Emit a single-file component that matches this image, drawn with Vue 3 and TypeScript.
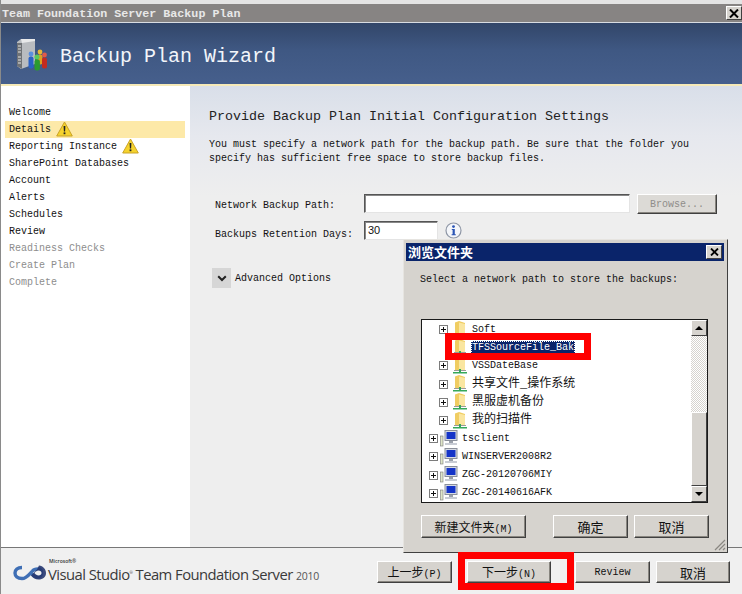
<script setup lang="ts">
interface NavItem { label: string; warn?: boolean; active?: boolean; off?: boolean }
const nav: NavItem[] = [
  { label: 'Welcome' },
  { label: 'Details', warn: true, active: true },
  { label: 'Reporting Instance', warn: true },
  { label: 'SharePoint Databases' },
  { label: 'Account' },
  { label: 'Alerts' },
  { label: 'Schedules' },
  { label: 'Review' },
  { label: 'Readiness Checks', off: true },
  { label: 'Create Plan', off: true },
  { label: 'Complete', off: true },
]
interface TreeRow { label: string; kind: 'folder' | 'pc'; selected?: boolean; noPlus?: boolean; big?: boolean }
const rows: TreeRow[] = [
  { label: 'Soft', kind: 'folder' },
  { label: 'TFSSourceFile_Bak', kind: 'folder', selected: true, noPlus: true },
  { label: 'VSSDateBase', kind: 'folder' },
  { label: '共享文件_操作系统', kind: 'folder', big: true },
  { label: '黑服虚机备份', kind: 'folder', big: true },
  { label: '我的扫描件', kind: 'folder', big: true },
  { label: 'tsclient', kind: 'pc' },
  { label: 'WINSERVER2008R2', kind: 'pc' },
  { label: 'ZGC-20120706MIY', kind: 'pc' },
  { label: 'ZGC-20140616AFK', kind: 'pc' },
]
</script>

<template>
  <div class="win">
    <div class="topline"></div>
    <div class="titlebar">
      <span class="ttext">Team Foundation Server Backup Plan</span>
      <button class="xbtn">
        <svg width="10" height="9" viewBox="0 0 10 9"><path d="M1 0.5 9 8.5M9 0.5 1 8.5" stroke="#000" stroke-width="2" fill="none" /></svg>
      </button>
    </div>
    <header class="banner">
      <svg class="srv" width="32" height="34" viewBox="0 0 32 34">
        <path d="M1 5 5 2H19V27L5 32 1 29Z" fill="#b9bcc0" />
        <path d="M5 2H19V4L6 6Z" fill="#e8e9ea" />
        <path d="M1 6 6 6V32L1 29Z" fill="#6f7276" />
        <path d="M2 9h3M2 12h3M2 15h3M2 20h3M2 23h3M2 26h3" stroke="#e4e4e4" stroke-width="1" />
        <circle cx="15" cy="17" r="2.4" fill="#5a8fe0" />
        <rect x="12.5" y="19.5" width="5" height="12" rx="2" fill="#2a62c4" />
        <circle cx="24" cy="15" r="2.4" fill="#e8b838" />
        <rect x="21.5" y="17.5" width="5" height="10" rx="2" fill="#e0a020" />
        <circle cx="28.5" cy="18" r="2.4" fill="#e05a4a" />
        <rect x="26" y="20.5" width="5" height="11" rx="2" fill="#c42a20" />
        <circle cx="21" cy="20" r="2.6" fill="#5cc85c" />
        <rect x="18.5" y="22.5" width="5.4" height="11" rx="2" fill="#2a9a30" />
      </svg>
      <span class="banner-title">Backup Plan Wizard</span>
    </header>
    <div class="accent"></div>

    <div class="body">
      <nav class="side">
        <div v-for="n in nav" :key="n.label" class="nav" :class="{ active: n.active, off: n.off }">
          <span>{{ n.label }}</span>
          <svg v-if="n.warn" class="warn" width="17" height="16" viewBox="0 0 17 16">
            <path d="M8.5 1 16.3 15H.7Z" fill="#f6d32d" stroke="#c9a227" stroke-linejoin="round" />
            <path d="M7.6 5h1.8l-.3 5.4h-1.2Z" fill="#222" />
            <rect x="7.6" y="11.4" width="1.8" height="1.8" fill="#222" />
          </svg>
        </div>
      </nav>
      <main class="main">
        <h1>Provide Backup Plan Initial Configuration Settings</h1>
        <p>You must specify a network path for the backup path. Be sure that the folder you<br />specify has sufficient free space to store backup files.</p>
        <div class="frow first">
          <label>Network Backup Path:</label>
          <div class="input wide"></div>
          <button class="btn browse">Browse...</button>
        </div>
        <div class="frow second">
          <label>Backups Retention Days:</label>
          <div class="input short">30</div>
          <svg class="info" width="17" height="17" viewBox="0 0 17 17">
            <circle cx="8.5" cy="8.5" r="7.5" fill="#f4f6fa" stroke="#8f97a6" stroke-width="1.2" />
            <circle cx="8.5" cy="4.6" r="1.4" fill="#2b55b5" />
            <path d="M6.8 7h3v5.2h1v1H6.6v-1h1V8h-.8Z" fill="#2b55b5" />
          </svg>
        </div>
        <div class="adv">
          <span class="chev">
            <svg width="10" height="7" viewBox="0 0 10 7"><path d="M1.2 1.2 5 5l3.8-3.8" stroke="#222" stroke-width="2" fill="none" /></svg>
          </span>
          <span class="advtext">Advanced Options</span>
        </div>
      </main>
    </div>

    <footer class="foot">
      <div class="logo">
        <svg width="35" height="17" viewBox="0 0 35 17">
          <path d="M9 3.5C4.5 3.5 2 6 2 9s2.5 5.5 7 5.5c5 0 8-5.500 10.500-7.500C21 5 23 5 25 5c2.500 0 3.500 2 3.500 4S27 13 24.500 13C22 13 20 11 18 9" fill="none" stroke="#3f6fb5" stroke-width="3.400" />
          <path d="M26 1.500c4 .5 7 3.500 7 7.500 0 4-3 6.500-7.500 6.500-3 0-5.500-1.500-7.500-4l6-6Z" fill="#26366f" opacity=".9" />
          <path d="M9 6C6.500 6 5 7.500 5 9s1.500 3 4 3c2 0 3.500-1 5-3-1.500-2-3-3-5-3Z" fill="#f0f0f0" />
          <path d="M25.500 6.500c-1.500 0-3 1-4 2.500 1 1.500 2.500 2.500 4 2.500 1.800 0 3-1.100 3-2.500s-1.200-2.500-3-2.500Z" fill="#f0f0f0" />
        </svg>
        <div class="logotext">
          <span class="ms">Microsoft®</span>
          <span class="vs">Visual Studio<sup>®</sup> Team Foundation Server <small>2010</small></span>
        </div>
      </div>
      <div class="foot-btns">
        <button class="btn fb prev">上一步<span class="key">(P)</span></button>
        <button class="btn fb next">下一步<span class="key">(N)</span></button>
        <button class="btn fb rev">Review</button>
        <button class="btn fb cancel">取消</button>
      </div>
    </footer>

    <section class="dialog">
      <div class="dtitle">
        <span>浏览文件夹</span>
        <button class="xbtn small">
          <svg width="9" height="8" viewBox="0 0 9 8"><path d="M1 .5 8 7.500M8 .5 1 7.500" stroke="#000" stroke-width="1.800" fill="none" /></svg>
        </button>
      </div>
      <div class="dmsg">Select a network path to store the backups:</div>
      <div class="tree">
        <div class="rows">
          <div v-for="r in rows" :key="r.label" class="row" :class="r.kind">
            <span class="plus" :class="{ none: r.noPlus }"></span>
            <svg v-if="r.kind === 'folder'" class="ico" width="16" height="17" viewBox="0 0 16 17">
              <path d="M3 1.500 7 0 13 2V13H3Z" fill="#f0cd62" />
              <path d="M7 1.500 13 3V13H7Z" fill="#fae6a0" />
              <path d="M2 13h12v1H2Z" fill="#9a9a9a" />
              <path d="M1 15h14v1.500H1Z" fill="#36a85a" />
              <path d="M7 12h2v3H7Z" fill="#36a85a" />
            </svg>
            <svg v-else class="ico pcico" width="18" height="17" viewBox="0 0 18 17">
              <rect x="0.500" y="6" width="2.500" height="10" fill="#dfe6c8" stroke="#7a7a7a" stroke-width=".6" />
              <rect x="5" y="0.500" width="12" height="10" fill="#d8dce4" stroke="#8a8f9a" />
              <rect x="6.500" y="2" width="9" height="7" fill="#1534c8" />
              <path d="M9 11h4v2H9Z" fill="#9aa0aa" />
              <path d="M5 13h12v2H5Z" fill="#c8ccd4" />
            </svg>
            <span class="rlabel" :class="{ sel: r.selected, big: r.big }">{{ r.label }}</span>
          </div>
        </div>
        <div class="sbar">
          <div class="sbtn"><i class="up"></i></div>
          <div class="strack"></div>
          <div class="sthumb"></div>
          <div class="sbtn"><i class="down"></i></div>
        </div>
      </div>
      <div class="dbtns">
        <button class="btn db newf">新建文件夹<span class="key">(M)</span></button>
        <button class="btn db ok">确定</button>
        <button class="btn db no">取消</button>
      </div>
      <svg class="grip" width="12" height="12" viewBox="0 0 12 12">
        <path d="M11 1 1 11M11 5 5 11M11 9 9 11" stroke="#8a8782" stroke-width="1.200" fill="none" />
      </svg>
    </section>

    <div class="red red-tree"></div>
    <div class="red red-next"></div>
  </div>
</template>

<style scoped>
.win {
  position: relative;
  width: 742px;
  height: 594px;
  overflow: hidden;
  display: flex;
  flex-direction: column;
  background: #f0f0f0;
  font-family: "Liberation Mono", "Noto Sans CJK SC", monospace;
  font-size: 10px;
  color: #111;
  box-sizing: border-box;
  border-left: 1px solid #8a8a8a;
}
button { font-family: inherit; padding: 0; margin: 0; color: inherit; }
.topline { height: 4px; background: #e4e4e4; flex: none; }
.titlebar {
  height: 18px;
  flex: none;
  background: #878483;
  color: #e8e8e8;
  font-weight: 700;
  font-size: 11.700px;
  display: flex;
  align-items: center;
  justify-content: space-between;
  padding: 0 0 0 1px;
  border-bottom: 1px solid #d8dce2;
}
.ttext { margin-top: 2px; }
.xbtn {
  width: 16px;
  height: 14px;
  background: #d6d3ce;
  border: 1px solid;
  border-color: #fff #404040 #404040 #fff;
  display: flex;
  align-items: center;
  justify-content: center;
  box-sizing: border-box;
}
.banner {
  height: 61px;
  flex: none;
  background: linear-gradient(#324669 0%, #3f5883 45%, #465f8c 100%);
  display: flex;
  align-items: center;
  color: #f2f5fa;
}
.srv { margin-left: 15px; flex: none; }
.banner-title { margin: 5px 0 0 12px; font-size: 20px; }
.accent { height: 2px; flex: none; background: #f6eab8; }
.body { height: 461px; flex: none; display: flex; }
.side { width: 189px; flex: none; background: #fff; padding-top: 18px; box-sizing: border-box; }
.nav {
  height: 17px;
  margin-left: 4px;
  width: 180px;
  padding-left: 4px;
  box-sizing: border-box;
  display: flex;
  align-items: center;
  gap: 5px;
  white-space: nowrap;
  color: #111;
}
.nav.active { background: #fde9a8; }
.nav.off { color: #8d8d8d; }
.warn { flex: none; margin-top: -1px; }
.main {
  flex: 1;
  padding: 23px 0 0 19px;
  box-sizing: border-box;
  background: linear-gradient(#d9dfe9 0, #e6e8ee 50px, #eeeeee 110px);
}
.main h1 { margin: 0; font-size: 13.330px; font-weight: 400; line-height: 16px; color: #222; }
.main p { margin: 13px 0 0; line-height: 14px; }
.frow { display: flex; align-items: center; }
.frow label { width: 149px; margin-left: 6px; flex: none; }
.frow.first { margin-top: 28px; height: 19px; }
.frow.first label { margin-top: 3px; }
.frow.second { margin-top: 8px; height: 19px; }
.frow.second label { margin-top: 7px; }
.input {
  height: 19px;
  background: #fff;
  box-sizing: border-box;
  border: 1px solid;
  border-color: #555 #e4e4e4 #e4e4e4 #555;
  box-shadow: inset 1px 1px 0 #888;
}
.wide { width: 266px; }
.short {
  width: 74px;
  font-family: "Liberation Sans", sans-serif;
  font-size: 11px;
  line-height: 17px;
  padding-left: 3px;
}
.btn {
  background: #d6d3ce;
  box-sizing: border-box;
  border: 1px solid;
  border-color: #fff #404040 #404040 #fff;
  box-shadow: inset -1px -1px 0 #88857f;
  white-space: nowrap;
}
.key { font-size: 10px; }
.browse {
  width: 80px;
  height: 20px;
  margin-left: 7px;
  padding-top: 1px;
  font-size: 10px;
  color: #8f8d8a;
  background: #dcdad6;
}
.info { margin-left: 7px; flex: none; }
.adv { display: flex; align-items: center; gap: 4px; margin: 28px 0 0 3px; }
.advtext { margin-top: 1px; }
.chev {
  width: 19px;
  height: 20px;
  background: #d6d6d6;
  display: flex;
  align-items: center;
  justify-content: center;
}
.foot {
  flex: 1;
  border-top: 1px solid #777;
  display: flex;
  align-items: flex-start;
  background: #f0f0f0;
}
.logo { display: flex; align-items: flex-start; margin: 16px 0 0 12px; width: 364px; flex: none; }
.logotext { position: relative; }
.ms {
  position: absolute;
  left: 1px;
  top: -6px;
  font: 600 5px / 6px "Open Sans", sans-serif;
  color: #333;
  white-space: nowrap;
}
.vs {
  font-family: "Open Sans", sans-serif;
  font-size: 14.800px;
  letter-spacing: -0.55px;
  color: #3a3a3a;
  white-space: nowrap;
  display: block;
  line-height: 14px;
  margin-top: 3px;
}
.vs sup { font-size: 4px; line-height: 0; }
.vs small { font-size: 10.500px; color: #555; letter-spacing: -0.3px; }
.foot-btns { display: flex; margin-top: 13px; }
.fb { height: 22px; font-size: 12px; }
.prev { width: 75px; }
.next { width: 84px; margin-left: 15px; }
.rev { width: 75px; margin-left: 24px; font-size: 10px; }
.cancel { width: 74px; margin-left: 6px; font-size: 13px; }

.dialog {
  position: absolute;
  left: 402px;
  top: 239px;
  width: 325px;
  height: 314px;
  box-sizing: border-box;
  background: #d6d3ce;
  border: 1px solid;
  border-color: #e6e4e0 #404040 #404040 #e6e4e0;
  padding: 3px 3px 0 2px;
}
.dtitle {
  height: 18px;
  background: #0a246a;
  color: #fff;
  font-size: 13px;
  font-weight: 700;
  line-height: 16px;
  display: flex;
  align-items: center;
  justify-content: space-between;
  padding: 0 2px;
  font-family: "Noto Sans CJK SC", sans-serif;
}
.small { width: 16px; height: 14px; }
.dmsg { margin: 12px 0 0 14px; line-height: 14px; }
.tree {
  margin: 32px 0 0 15px;
  width: 287px;
  height: 184px;
  box-sizing: border-box;
  border: 1px solid #1a1a1a;
  background: #fff;
  display: flex;
}
.rows { flex: 1; overflow: hidden; }
.row { height: 18.200px; display: flex; align-items: center; white-space: nowrap; }
.row.folder { padding-left: 17px; }
.row.pc { padding-left: 7px; }
.plus {
  width: 9px;
  height: 9px;
  box-sizing: border-box;
  border: 1px solid #7c7c7c;
  flex: none;
  margin-top: 1px;
  background:
    linear-gradient(#111, #111) center / 5px 1px no-repeat,
    linear-gradient(#111, #111) center / 1px 5px no-repeat,
    #fff;
}
.plus.none { visibility: hidden; }
.ico { flex: none; margin-left: 4px; }
.pcico { margin-left: 2px; }
.rlabel { margin-left: 3px; padding: 0 1px; line-height: 13px; }
.rlabel.big { font-size: 12px; line-height: 16px; }
.rlabel.sel { background: #0a246a; color: #fff; outline: 1px dotted #fff; outline-offset: -1px; }
.sbar { width: 16px; flex: none; display: flex; flex-direction: column; }
.sbtn {
  height: 16px;
  background: #d6d3ce;
  border: 1px solid;
  border-color: #fff #404040 #404040 #fff;
  box-sizing: border-box;
  flex: none;
  display: flex;
  align-items: center;
  justify-content: center;
}
.sbtn i { width: 0; height: 0; border-left: 4px solid transparent; border-right: 4px solid transparent; }
.up { border-bottom: 4px solid #000; }
.down { border-top: 4px solid #000; }
.strack {
  height: 76px;
  flex: none;
  background: repeating-conic-gradient(#d6d3ce 0 25%, #fff 0 50%) 0 0 / 2px 2px;
}
.sthumb {
  flex: 1;
  background: #d6d3ce;
  border: 1px solid;
  border-color: #fff #404040 #404040 #fff;
  box-sizing: border-box;
}
.dbtns { display: flex; margin: 12px 0 0 15px; }
.db { height: 23px; font-size: 12px; }
.newf { width: 105px; }
.ok { width: 75px; margin-left: 27px; font-size: 13px; }
.no { width: 75px; margin-left: 6px; font-size: 13px; }
.grip { position: absolute; right: 1px; bottom: 1px; }
.red { position: absolute; border: 7px solid #f00; box-sizing: border-box; }
.red-tree { left: 444px; top: 333px; width: 146px; height: 27px; }
.red-next { left: 457px; top: 552px; width: 116px; height: 38px; }
</style>

<style>
html, body { margin: 0; padding: 0; background: #f0f0f0; }
</style>
